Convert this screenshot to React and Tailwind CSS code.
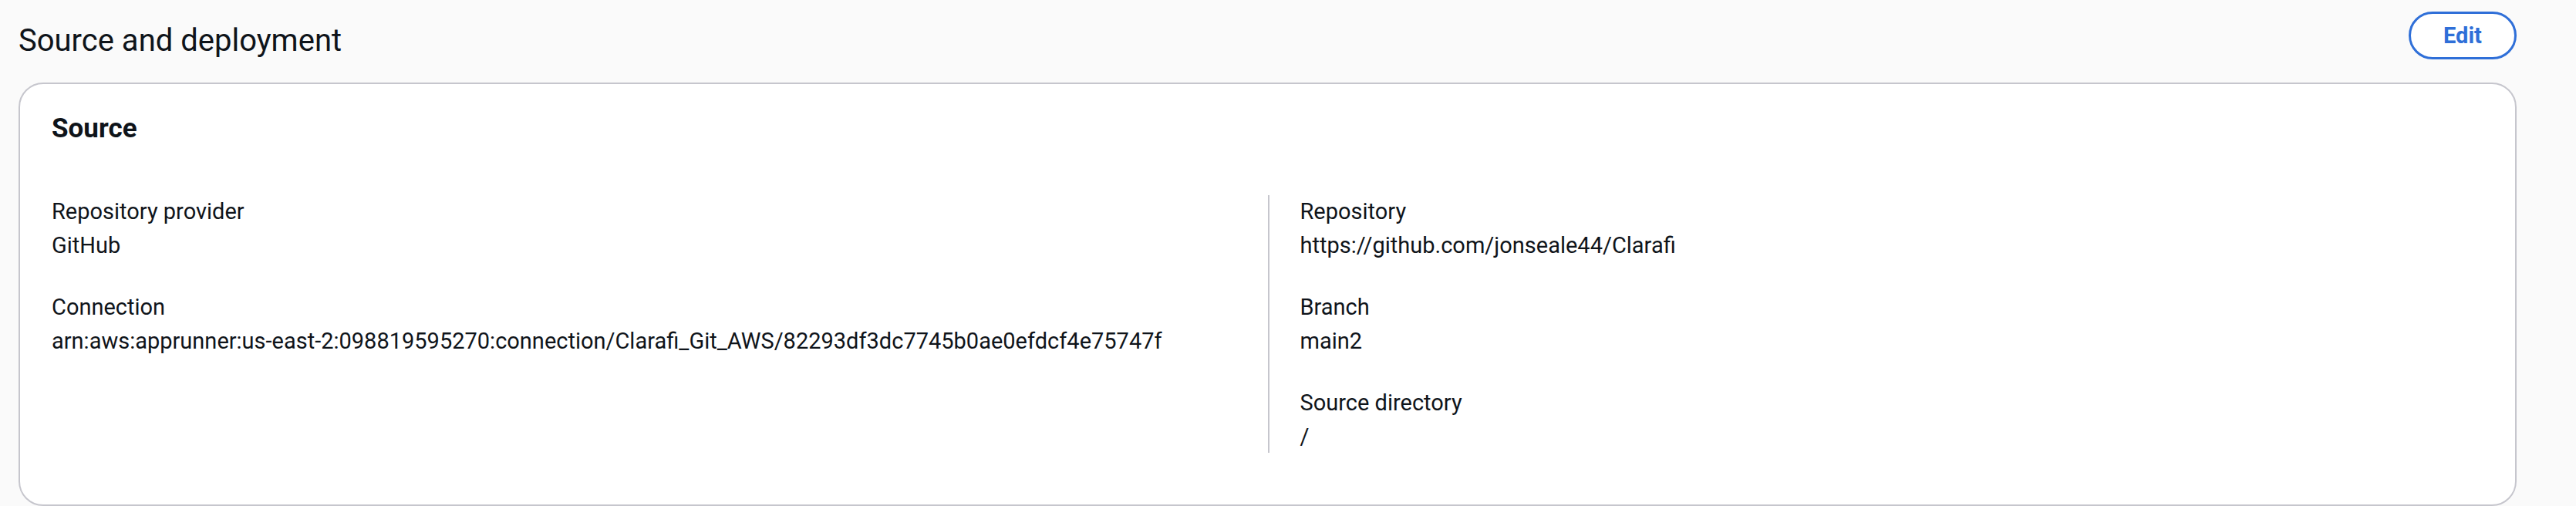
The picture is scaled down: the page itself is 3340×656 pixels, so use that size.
export default function App() {
  const Pair = ({ label, value }) => (
    <div className="flex flex-col gap-[2px]">
      <div className="leading-[42px]">{label}</div>
      <div className="leading-[42px]">{value}</div>
    </div>
  );
  return (
    <div
      className="w-[3340px] h-[656px] bg-[#fafafa] pl-[24px] pr-[77px] text-[#0f141a] overflow-hidden"
      style={{ fontFamily: "Roboto, 'Noto Sans', sans-serif" }}
    >
      <div className="flex justify-between items-start h-[107px]">
        <h1 className="mt-[27px] text-[40px] leading-[51px] font-normal">Source and deployment</h1>
        <button className="mt-[15px] h-[62px] w-[140px] rounded-full border-[3px] border-[#2f6fd8] bg-white text-[#2f6fd8] text-[29px] font-bold leading-none">
          Edit
        </button>
      </div>
      <div className="h-[549px] rounded-[32px] border-2 border-[#c6c6cd] bg-white px-[41px] pt-[34px]">
        <h2 className="text-[35px] leading-[47px] font-bold">Source</h2>
        <div className="mt-[63px] grid grid-cols-2 text-[29px]">
          <div className="flex flex-col gap-[38px]">
            <Pair label="Repository provider" value="GitHub" />
            <Pair
              label="Connection"
              value="arn:aws:apprunner:us-east-2:098819595270:connection/Clarafi_Git_AWS/82293df3dc7745b0ae0efdcf4e75747f"
            />
          </div>
          <div className="flex flex-col gap-[38px] border-l-2 border-[#c6c6cd] pl-[40px]">
            <Pair label="Repository" value="https://github.com/jonseale44/Clarafi" />
            <Pair label="Branch" value="main2" />
            <Pair label="Source directory" value="/" />
          </div>
        </div>
      </div>
    </div>
  );
}
